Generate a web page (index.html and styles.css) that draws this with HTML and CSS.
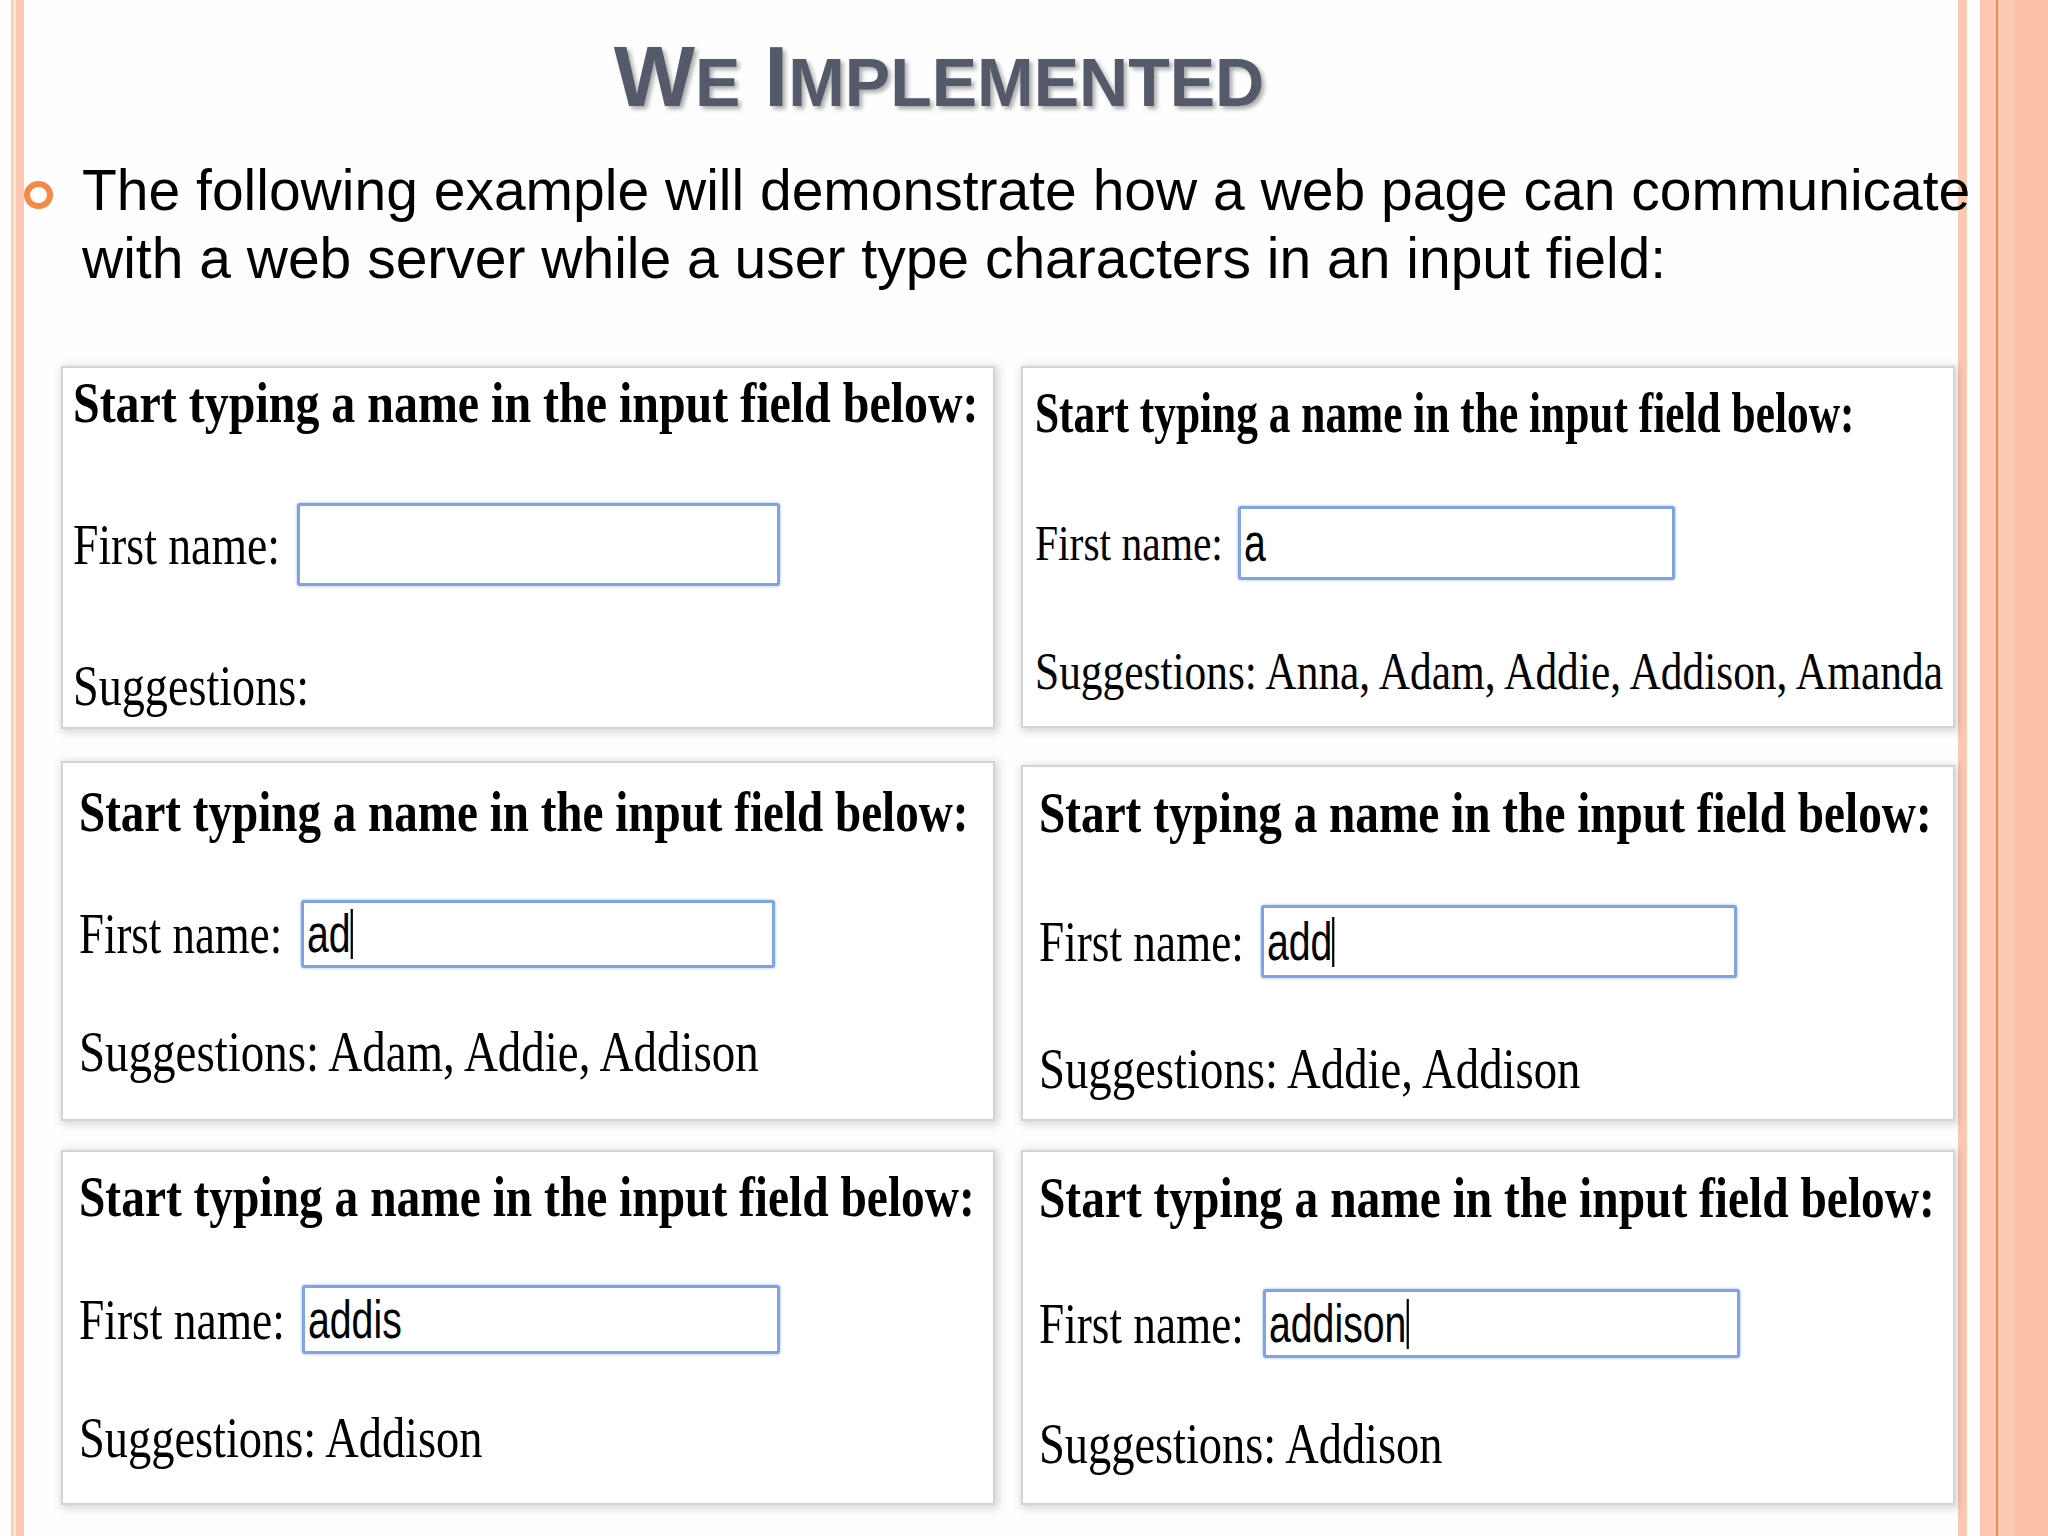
FILE: index.html
```html
<!DOCTYPE html>
<html lang="en">
<head>
<meta charset="utf-8">
<title>We Implemented</title>
<link rel="stylesheet" href="styles.css">
</head>
<body>
<div class="slide">
  <h1 class="title"><span class="cap">W</span><span class="sc">E</span> <span class="cap">I</span><span class="sc">MPLEMENTED</span></h1>
  <div class="point">
    <span class="bullet"></span>
    <p class="text">The following example will demonstrate how a web page can communicate with a web server while a user type characters in an input field:</p>
  </div>
  <div class="grid">
    <div class="panel p1">
      <h3 class="ph"><span class="tx">Start typing a name in the input field below:</span></h3>
      <div class="row"><div class="lbl"><span class="ltx">First name:</span></div><div class="inp"></div></div>
      <p class="sug"><span class="stx">Suggestions:</span></p>
    </div>
    <div class="panel p2">
      <h3 class="ph"><span class="tx">Start typing a name in the input field below:</span></h3>
      <div class="row"><div class="lbl"><span class="ltx">First name:</span></div><div class="inp"><span class="val">a</span></div></div>
      <p class="sug"><span class="stx">Suggestions: Anna, Adam, Addie, Addison, Amanda</span></p>
    </div>
    <div class="panel p3">
      <h3 class="ph"><span class="tx">Start typing a name in the input field below:</span></h3>
      <div class="row"><div class="lbl"><span class="ltx">First name:</span></div><div class="inp"><span class="val cur">ad</span></div></div>
      <p class="sug"><span class="stx">Suggestions: Adam, Addie, Addison</span></p>
    </div>
    <div class="panel p4">
      <h3 class="ph"><span class="tx">Start typing a name in the input field below:</span></h3>
      <div class="row"><div class="lbl"><span class="ltx">First name:</span></div><div class="inp"><span class="val cur">add</span></div></div>
      <p class="sug"><span class="stx">Suggestions: Addie, Addison</span></p>
    </div>
    <div class="panel p5">
      <h3 class="ph"><span class="tx">Start typing a name in the input field below:</span></h3>
      <div class="row"><div class="lbl"><span class="ltx">First name:</span></div><div class="inp"><span class="val">addis</span></div></div>
      <p class="sug"><span class="stx">Suggestions: Addison</span></p>
    </div>
    <div class="panel p6">
      <h3 class="ph"><span class="tx">Start typing a name in the input field below:</span></h3>
      <div class="row"><div class="lbl"><span class="ltx">First name:</span></div><div class="inp"><span class="val cur">addison</span></div></div>
      <p class="sug"><span class="stx">Suggestions: Addison</span></p>
    </div>
  </div>
</div>
</body>
</html>
```

FILE: styles.css
```css
html, body {
  margin: 0;
  padding: 0;
}

body {
  width: 2048px;
  height: 1536px;
  overflow: hidden;
  font-family: "Liberation Sans", Arial, sans-serif;
  background: linear-gradient(to right,
    #fefefe 0, #fefefe 11px,
    #fbc8b3 11px, #fbc8b3 13px,
    #fde3d8 13px, #fde3d8 16px,
    #fbc8b3 16px, #fbc8b3 24px,
    #fefefe 24px, #fefefe 1958px,
    #fbc8b3 1958px, #fbc8b3 1967px,
    #fefefe 1967px, #fefefe 1980px,
    #fcc8b1 1980px, #fcc8b1 1996px,
    #f08a52 1996px, #f08a52 1998px,
    #fcc8b1 1998px, #fcc8b1 2015px,
    #fabfa6 2015px, #fabfa6 2048px);
}

.slide {
  padding-top: 26px;
}

/* Title */
.title {
  margin: 0;
  width: 1878px;
  height: 100px;
  line-height: 100px;
  font-size: 86px;
  font-weight: 700;
  color: #555a6a;
  text-align: center;
  text-shadow: 3px 3px 4px rgba(0, 0, 0, 0.33);
}

.title .sc {
  font-size: 68px;
}

/* Bullet point */
.point {
  display: flex;
  align-items: flex-start;
  margin-top: 30px;
  padding-left: 24px;
}

.bullet {
  flex: none;
  box-sizing: border-box;
  width: 29px;
  height: 28px;
  margin-top: 25px;
  margin-right: 29px;
  border: 6px solid #f48a45;
  border-radius: 50%;
}

.text {
  margin: 0;
  width: 1900px;
  font-size: 57px;
  line-height: 68px;
  color: #000;
}

/* Screenshot panels */
.grid {
  display: grid;
  grid-template-columns: 930px 930px;
  grid-template-rows: 360px 358px 351px;
  column-gap: 30px;
  row-gap: 33px;
  margin-top: 76px;
  margin-left: 63px;
}

.panel {
  display: flex;
  flex-direction: column;
  align-items: flex-start;
  background: #fff;
  color: #000;
  font-family: "Liberation Serif", "Times New Roman", serif;
  box-shadow: 0 0 0 2px #d4d4d4, 2px 2px 8px 4px rgba(0, 0, 0, 0.15);
}

.ph {
  margin: 0;
  font-size: 57px;
  line-height: 60px;
  font-weight: 700;
  white-space: nowrap;
}

.tx,
.ltx,
.stx {
  display: inline-block;
  transform-origin: 0 50%;
  white-space: nowrap;
}

.row {
  display: flex;
  align-items: center;
}

.lbl {
  flex: none;
  min-width: 0;
  font-size: 57px;
  white-space: nowrap;
}

.inp {
  flex: none;
  box-sizing: border-box;
  display: flex;
  align-items: center;
  padding-left: 3px;
  background: #fff;
  border: 3px solid #80a3e2;
  border-radius: 3px;
  box-shadow: 0 0 3px rgba(110, 150, 225, 0.7);
  font-family: "Liberation Sans", Arial, sans-serif;
  font-size: 53px;
  color: #000;
}

.val {
  display: inline-block;
  line-height: 50px;
  transform: scaleX(0.74);
  transform-origin: 0 50%;
  white-space: nowrap;
}

.val.cur {
  border-right: 3px solid #000;
}

.sug {
  margin: 0;
  font-size: 57px;
  line-height: 60px;
  white-space: nowrap;
}

/* Panel 1 */
.p1 { padding-left: 10px; margin-bottom: 1px; }
.p1 .ph { padding-top: 5px; }
.p1 .tx { transform: scaleX(0.841); }
.p1 .row { margin-top: 70px; height: 83px; }
.p1 .lbl { width: 224px; line-height: 83px; }
.p1 .ltx { transform: scaleX(0.802); }
.p1 .inp { width: 483px; height: 83px; }
.p1 .sug { margin-top: 70px; }
.p1 .stx { transform: scaleX(0.81); }

/* Panel 2 */
.p2 { padding-left: 12px; margin-bottom: 2px; }
.p2 .ph { padding-top: 15px; }
.p2 .tx { transform: scaleX(0.761); }
.p2 .row { margin-top: 63px; height: 74px; }
.p2 .lbl { width: 203px; line-height: 74px; font-size: 50px; }
.p2 .ltx { transform: scaleX(0.83); }
.p2 .inp { width: 437px; height: 74px; }
.p2 .sug { margin-top: 61px; font-size: 53px; }
.p2 .stx { transform: scaleX(0.819); }

/* Panel 3 */
.p3 { padding-left: 16px; margin-top: 2px; }
.p3 .ph { padding-top: 19px; }
.p3 .tx { transform: scaleX(0.826); }
.p3 .row { margin-top: 58px; height: 68px; }
.p3 .lbl { width: 222px; line-height: 68px; }
.p3 .ltx { transform: scaleX(0.787); }
.p3 .inp { width: 474px; height: 68px; }
.p3 .sug { margin-top: 54px; }
.p3 .stx { transform: scaleX(0.824); }

/* Panel 4 */
.p4 { padding-left: 16px; margin-top: 6px; }
.p4 .ph { padding-top: 16px; }
.p4 .tx { transform: scaleX(0.829); }
.p4 .row { margin-top: 62px; height: 73px; }
.p4 .lbl { width: 222px; line-height: 73px; }
.p4 .ltx { transform: scaleX(0.794); }
.p4 .inp { width: 476px; height: 73px; }
.p4 .sug { margin-top: 61px; }
.p4 .stx { transform: scaleX(0.82); }

/* Panel 5 */
.p5 { padding-left: 16px; }
.p5 .ph { padding-top: 15px; }
.p5 .tx { transform: scaleX(0.832); }
.p5 .row { margin-top: 58px; height: 69px; }
.p5 .lbl { width: 223px; line-height: 69px; }
.p5 .ltx { transform: scaleX(0.798); }
.p5 .inp { width: 478px; height: 69px; }
.p5 .sug { margin-top: 54px; }
.p5 .stx { transform: scaleX(0.814); }

/* Panel 6 */
.p6 { padding-left: 16px; }
.p6 .ph { padding-top: 16px; }
.p6 .tx { transform: scaleX(0.832); }
.p6 .row { margin-top: 61px; height: 69px; }
.p6 .lbl { width: 224px; line-height: 69px; }
.p6 .ltx { transform: scaleX(0.794); }
.p6 .inp { width: 477px; height: 69px; }
.p6 .sug { margin-top: 56px; }
.p6 .stx { transform: scaleX(0.814); }
```
